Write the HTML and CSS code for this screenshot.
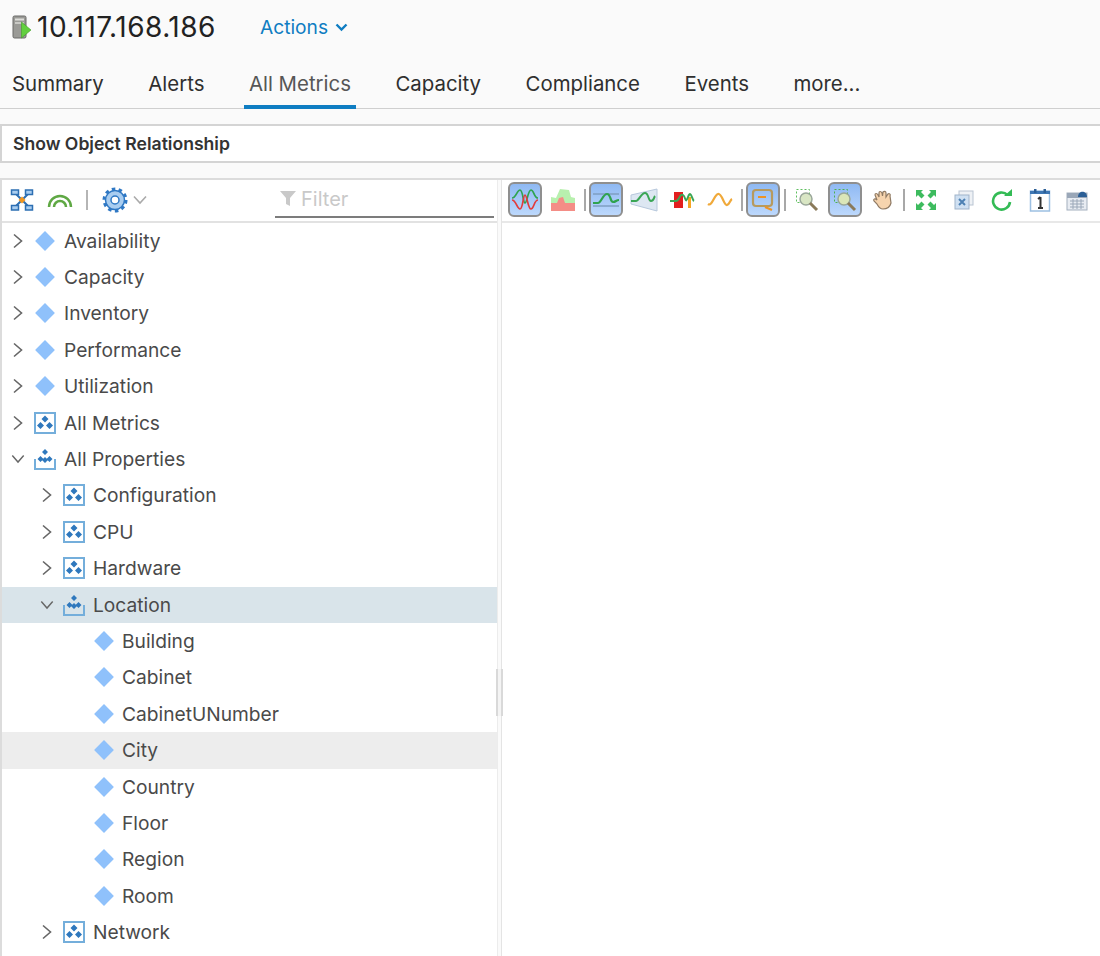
FILE: index.html
```html
<!DOCTYPE html>
<html lang="en">
<head>
<meta charset="utf-8">
<title>10.117.168.186</title>
<link rel="stylesheet" href="styles.css">
</head>
<body>
<svg class="defs" width="0" height="0" aria-hidden="true">
  <defs>
    <symbol id="chev-r" viewBox="0 0 12 16"><path d="M2 1.500 9.500 8 2 14.500" fill="none" stroke="#666" stroke-width="1.600"/></symbol>
    <symbol id="chev-d" viewBox="0 0 16 12"><path d="M1.500 2 8 9.500 14.500 2" fill="none" stroke="#666" stroke-width="1.600"/></symbol>
    <symbol id="diamond" viewBox="0 0 20 20"><path d="M10 1 19 10 10 19 1 10Z" fill="#8fc1fb"/></symbol>
    <symbol id="group" viewBox="0 0 22 22">
      <rect x="1" y="1" width="20" height="20" fill="#fff" stroke="#74aedb" stroke-width="2"/>
      <path d="M11 3.500 14.500 7 11 10.500 7.500 7ZM6.500 10 10 13.500 6.500 17 3 13.500ZM15.500 10 19 13.500 15.500 17 12 13.500Z" fill="#2f78bd"/>
    </symbol>
    <symbol id="group-open" viewBox="0 0 22 22">
      <path d="M1 11V21H21V11" fill="none" stroke="#74aedb" stroke-width="2"/>
      <path d="M11 1 14 4 11 7 8 4ZM6.500 8 9.500 11 6.500 14 3.500 11ZM15.500 8 18.500 11 15.500 14 12.500 11ZM11 9 14 12 11 15 8 12Z" fill="#2f78bd"/>
    </symbol>
  </defs>
</svg>

<header class="head">
  <div class="title-row">
    <svg class="host-icon" width="20" height="24" viewBox="0 0 20 24">
      <rect x="1" y="1" width="13" height="22" rx="1.500" fill="#9a9a96" stroke="#6a6a68"/>
      <rect x="3" y="3.500" width="9" height="2" fill="#dededa"/>
      <rect x="3" y="7" width="9" height="2" fill="#c9c9c5"/>
      <path d="M9.500 7 19 15 9.500 23Z" fill="#62cf3f" stroke="#3f9d25" stroke-width=".6"/>
    </svg>
    <h1 class="title">10.117.168.186</h1>
    <a class="actions">Actions
      <svg class="actions-chev" width="13" height="9" viewBox="0 0 13 9"><path d="M1.500 1.500 6.500 6.500 11.500 1.500" fill="none" stroke="#0f7dc2" stroke-width="2.400"/></svg>
    </a>
  </div>
  <nav class="tabs">
    <a class="tab">Summary</a>
    <a class="tab">Alerts</a>
    <a class="tab tab-active">All Metrics</a>
    <a class="tab">Capacity</a>
    <a class="tab">Compliance</a>
    <a class="tab">Events</a>
    <a class="tab">more...</a>
  </nav>
</header>

<div class="relation">Show Object Relationship</div>

<main class="panels">
  <section class="left">
    <div class="left-tools">
      <svg class="t-icon" width="24" height="24" viewBox="0 0 24 24">
        <path d="M5 5 19 19M19 5 5 19" stroke="#2d6fb3" stroke-width="2"/>
        <g fill="#a9cdf0" stroke="#2d6fb3" stroke-width="1.500">
          <rect x="1.500" y="2" width="7" height="4.500"/><rect x="15.500" y="2" width="7" height="4.500"/>
          <rect x="1.500" y="17.500" width="7" height="4.500"/><rect x="15.500" y="17.500" width="7" height="4.500"/>
        </g>
        <path d="M12 8.500 15.500 12 12 15.500 8.500 12Z" fill="#ef9620"/>
      </svg>
      <svg class="t-icon arc" width="26" height="16" viewBox="0 0 26 16">
        <path d="M2 15A11 11 0 0 1 24 15" fill="none" stroke="#5fa844" stroke-width="2.500"/>
        <path d="M7 15A6 6 0 0 1 19 15" fill="none" stroke="#5fa844" stroke-width="2.500"/>
      </svg>
      <span class="l-sep"></span>
      <svg class="t-icon gear" width="26" height="26" viewBox="0 0 26 26">
        <circle cx="13" cy="13" r="9.500" fill="#a9cdf0" stroke="#2f78c4" stroke-width="1.500"/>
        <circle cx="13" cy="13" r="11" fill="none" stroke="#2f78c4" stroke-width="3" stroke-dasharray="3.500 3.400"/>
        <circle cx="13" cy="13" r="4" fill="#fff" stroke="#2f78c4" stroke-width="1.500"/>
      </svg>
      <svg class="gear-chev" width="14" height="10" viewBox="0 0 14 10"><path d="M1 1.500 7 8 13 1.500" fill="none" stroke="#aaa" stroke-width="1.600"/></svg>
      <div class="filter">
        <svg width="16" height="17" viewBox="0 0 16 17"><path d="M0 1H16L10 8V16L6 14V8Z" fill="#c9c9c9"/></svg>
        <span>Filter</span>
      </div>
    </div>
    <ul class="tree">
      <li class="row"><svg class="chev"><use href="#chev-r"/></svg><svg class="node"><use href="#diamond"/></svg>Availability</li>
      <li class="row"><svg class="chev"><use href="#chev-r"/></svg><svg class="node"><use href="#diamond"/></svg>Capacity</li>
      <li class="row"><svg class="chev"><use href="#chev-r"/></svg><svg class="node"><use href="#diamond"/></svg>Inventory</li>
      <li class="row"><svg class="chev"><use href="#chev-r"/></svg><svg class="node"><use href="#diamond"/></svg>Performance</li>
      <li class="row"><svg class="chev"><use href="#chev-r"/></svg><svg class="node"><use href="#diamond"/></svg>Utilization</li>
      <li class="row"><svg class="chev"><use href="#chev-r"/></svg><svg class="node"><use href="#group"/></svg>All Metrics</li>
      <li class="row"><svg class="chev"><use href="#chev-d"/></svg><svg class="node"><use href="#group-open"/></svg>All Properties</li>
      <li class="row lv2"><svg class="chev"><use href="#chev-r"/></svg><svg class="node"><use href="#group"/></svg>Configuration</li>
      <li class="row lv2"><svg class="chev"><use href="#chev-r"/></svg><svg class="node"><use href="#group"/></svg>CPU</li>
      <li class="row lv2"><svg class="chev"><use href="#chev-r"/></svg><svg class="node"><use href="#group"/></svg>Hardware</li>
      <li class="row lv2 row-open"><svg class="chev"><use href="#chev-d"/></svg><svg class="node"><use href="#group-open"/></svg>Location</li>
      <li class="row lv3"><svg class="node"><use href="#diamond"/></svg>Building</li>
      <li class="row lv3"><svg class="node"><use href="#diamond"/></svg>Cabinet</li>
      <li class="row lv3"><svg class="node"><use href="#diamond"/></svg>CabinetUNumber</li>
      <li class="row lv3 row-hover"><svg class="node"><use href="#diamond"/></svg>City</li>
      <li class="row lv3"><svg class="node"><use href="#diamond"/></svg>Country</li>
      <li class="row lv3"><svg class="node"><use href="#diamond"/></svg>Floor</li>
      <li class="row lv3"><svg class="node"><use href="#diamond"/></svg>Region</li>
      <li class="row lv3"><svg class="node"><use href="#diamond"/></svg>Room</li>
      <li class="row lv2"><svg class="chev"><use href="#chev-r"/></svg><svg class="node"><use href="#group"/></svg>Network</li>
    </ul>
  </section>
  <div class="splitter"><span class="grip"></span></div>
  <section class="right">
    <div class="chart-tools">
      <span class="btn on"><svg width="28" height="25" viewBox="0 0 28 25"><path d="M1 11C5 11 6 3 9 3S12 16 14 16 17 3 20 3 23 11 27 11" fill="none" stroke="#2fa34f" stroke-width="1.700"/><path d="M1 13C5 13 6 22 9 22S12 8 14 8 17 22 20 22 23 13 27 13" fill="none" stroke="#e23c3c" stroke-width="1.700"/></svg></span>
      <span class="btn"><svg width="26" height="24" viewBox="0 0 26 24"><path d="M1 9 6 10 10 1 19 2 21 9 25 10V23H1Z" fill="#b8f0ae"/><path d="M1 15H7L9 10 13 9 15 15H25V23H1Z" fill="#f48d86"/></svg></span>
      <span class="sep"></span>
      <span class="btn on"><svg width="30" height="22" viewBox="0 0 28 22"><path d="M1 5H27M1 17H27" stroke="#7f9fc2" stroke-width="1.500"/><path d="M1 14H6C9 14 11 5 15 5S18 13 21 13 24 11 27 11" fill="none" stroke="#2fa34f" stroke-width="2.200"/></svg></span>
      <span class="btn"><svg width="28" height="26" viewBox="0 0 28 26"><path d="M1 8 27 2V24L1 17Z" fill="#dde7f2" stroke="#b7c8dc"/><path d="M1 14H6C9 14 11 6 15 6S18 14 21 14 24 10 25 9" fill="none" stroke="#3aa655" stroke-width="2"/></svg></span>
      <span class="btn"><svg width="26" height="20" viewBox="0 0 26 20"><rect x="5" y="2" width="9" height="16" fill="#e21f1f"/><rect x="19" y="7" width="3" height="11" fill="#f5a623"/><path d="M1 11H7C10 11 11 3 14 5S16 15 19 7 23 10 25 11" fill="none" stroke="#3aa655" stroke-width="2"/></svg></span>
      <span class="btn"><svg width="26" height="16" viewBox="0 0 26 16"><path d="M1 12C5 15 7 3 11 2S17 14 20 13 23 8 25 7" fill="none" stroke="#f0a93a" stroke-width="2.200"/></svg></span>
      <span class="sep"></span>
      <span class="btn on"><svg width="26" height="26" viewBox="0 0 26 26"><rect x="3" y="3" width="19" height="16" rx="3" fill="none" stroke="#b79a5e" stroke-width="2.200"/><path d="M8 10H16" stroke="#ec9326" stroke-width="2"/><path d="M15 20 22 23" stroke="#ec9326" stroke-width="2.200"/></svg></span>
      <span class="sep"></span>
      <span class="btn"><svg width="24" height="24" viewBox="0 0 24 24"><rect x="1.500" y="1.500" width="13" height="13" fill="none" stroke="#5ebf5e" stroke-dasharray="2 2"/><circle cx="11" cy="11" r="6" fill="#d9e6c4" stroke="#9aa79a" stroke-width="1.500"/><path d="M15 15 22 22" stroke="#8a7a5a" stroke-width="3"/></svg></span>
      <span class="btn on"><svg width="24" height="24" viewBox="0 0 24 24"><rect x="1.500" y="1.500" width="13" height="13" fill="none" stroke="#4fb04f" stroke-dasharray="2 2"/><circle cx="11" cy="11" r="6" fill="#dbe6b8" stroke="#9aa79a" stroke-width="1.500"/><path d="M15 15 22 22" stroke="#8a7a5a" stroke-width="3"/></svg></span>
      <span class="btn"><svg width="22" height="20" viewBox="0 0 22 20"><path d="M5 10 3 5C3 3 5 3 6 5L7 7 7 3C7 1 9 1 10 3L10.500 6 11 2C12 1 14 1 14 3L14 7 16 4C17 3 19 4 18 6L19 13C18 17 15 19 11 19 8 19 6 16 5 14L2 11C1 9 3 8 5 10Z" fill="#f6d4ae" stroke="#8f7a64" stroke-width="1.200"/></svg></span>
      <span class="sep"></span>
      <span class="btn"><svg width="22" height="22" viewBox="0 0 22 22" fill="#3dbb5e"><path d="M1 1H8L6 3 9.500 6.500 6.500 9.500 3 6 1 8ZM21 1V8L19 6 15.500 9.500 12.500 6.500 16 3 14 1ZM1 21V14L3 16 6.500 12.500 9.500 15.500 6 19 8 21ZM21 21H14L16 19 12.500 15.500 15.500 12.500 19 16 21 14Z"/></svg></span>
      <span class="btn"><svg width="20" height="20" viewBox="0 0 20 20"><rect x="5" y="1" width="14" height="14" fill="#eef1f5" stroke="#b9c4d2"/><rect x="1" y="5" width="14" height="14" fill="#cfe0f2" stroke="#9fb3ca"/><path d="M5 9 11 15M11 9 5 15" stroke="#4d80b3" stroke-width="2"/></svg></span>
      <span class="btn"><svg width="22" height="22" viewBox="0 0 22 22"><path d="M16.500 6A8.500 8.500 0 1 0 19 13" fill="none" stroke="#33bb55" stroke-width="2.600"/><path d="M13 7H21V0Z" fill="#33bb55"/></svg></span>
      <span class="btn"><svg width="22" height="24" viewBox="0 0 22 24"><rect x="1.500" y="3" width="19" height="20" fill="#fff" stroke="#9dc0e2" stroke-width="1.500"/><rect x="1" y="3" width="20" height="3" fill="#3d76b3"/><rect x="5" y="1" width="2.500" height="4" fill="#2c5f96"/><rect x="14.500" y="1" width="2.500" height="4" fill="#2c5f96"/><path d="M11.500 9V20M9 11 11.500 9M9 20H14" fill="none" stroke="#333" stroke-width="2"/></svg></span>
      <span class="btn"><svg width="22" height="22" viewBox="0 0 22 22"><rect x="1" y="4" width="20" height="17" fill="#e8ecf2" stroke="#a3afbe"/><rect x="1" y="4" width="20" height="5" fill="#9aa7b8"/><path d="M12 8C12 1 21 1 21 8Z" fill="#2c5f96"/><path d="M4 12H18M4 15H18M4 18H18M7 10V20M11 10V20M15 10V20" stroke="#9aa7b8"/></svg></span>
    </div>
  </section>
</main>
</body>
</html>
```

FILE: styles.css
```css
* { box-sizing: border-box; }

html, body { height: 100%; }

body {
  margin: 0;
  height: 956px;
  overflow: hidden;
  background: #fafafa;
  color: #4a4a4a;
  font-family: Inter, "Open Sans", "Liberation Sans", sans-serif;
}

.defs { position: absolute; }

a { color: inherit; }

.head {
  height: 109px;
  border-bottom: 1px solid #cfcfcf;
}

.title-row {
  height: 54px;
  display: flex;
  align-items: center;
  padding-left: 12px;
}

.host-icon { margin-right: 5px; }

.title {
  margin: 0;
  font-size: 28px;
  font-weight: 400;
  letter-spacing: 0.5px;
  color: #222;
}

.actions {
  margin-left: 44px;
  display: flex;
  align-items: center;
  gap: 7px;
  font-size: 19.2px;
  color: #0f7dc2;
}

.tabs {
  height: 55px;
  display: flex;
  gap: 44.5px;
  padding-left: 12px;
}

.tab {
  height: 55px;
  padding-top: 16.5px;
  font-size: 20.4px;
  color: #2f2f2f;
}

.tab-active {
  margin: 0 -5px;
  padding: 16.5px 5px 0;
  border-bottom: 4px solid #0f7dc2;
  color: #565656;
}

.relation {
  height: 39px;
  margin-top: 15px;
  padding-left: 11px;
  display: flex;
  align-items: center;
  background: #fff;
  border: solid #d4d4d4;
  border-width: 2px 0 2px 2px;
  font-size: 17.6px;
  font-weight: 600;
  color: #333;
}

.panels {
  margin-top: 15px;
  height: 779px;
  display: flex;
  background: #fff;
  border-top: 2px solid #dcdcdc;
  border-left: 2px solid #dcdcdc;
}

.left {
  width: 495px;
  flex: none;
  display: flex;
  flex-direction: column;
}

.left-tools {
  height: 43px;
  flex: none;
  display: flex;
  align-items: center;
  padding: 0 0 2px 8px;
  border-bottom: 2px solid #e2e2e2;
}

.arc { margin-left: 13px; }

.l-sep {
  width: 2px;
  height: 20px;
  margin: 0 14px 0 13px;
  background: #b5b5b5;
}

.gear-chev { margin-left: 5px; }

.filter {
  margin-left: 128px;
  width: 219px;
  height: 36px;
  display: flex;
  align-items: center;
  gap: 5px;
  padding: 0 0 0 5px;
  border-bottom: 2px solid #7c7c7c;
  font-size: 20px;
  color: #c9c9c9;
}

.tree {
  margin: 0;
  padding: 0;
  list-style: none;
  flex: 1;
  overflow: hidden;
}

.row {
  height: 36.4px;
  display: flex;
  align-items: center;
  padding-bottom: 1px;
  font-size: 19.2px;
  color: #4a4a4a;
  padding-left: 9px;
}

.lv2 { padding-left: 38px; }

.lv3 { padding-left: 91px; }

.lv3 .node { margin-right: 7px; }

.row-open { background: #d9e4ea; }

.row-hover { background: #ededed; }

.chev {
  width: 14px;
  height: 16px;
  flex: none;
  margin-right: 9px;
}

.node {
  width: 22px;
  height: 22px;
  flex: none;
  margin-right: 8px;
}

.splitter {
  width: 5px;
  flex: none;
  position: relative;
  background: #fafafa;
  border-left: 1px solid #ececec;
  border-right: 1px solid #e4e4e4;
}

.grip {
  position: absolute;
  top: 489px;
  left: -2px;
  width: 7px;
  height: 47px;
  border: solid #d9d9d9;
  border-width: 0 2px;
  background: #f4f4f4;
}

.right {
  flex: 1;
  min-width: 0;
}

.chart-tools {
  height: 43px;
  display: flex;
  align-items: center;
  gap: 3.8px;
  padding: 0 0 2px 6px;
  border-bottom: 2px solid #e8e8e8;
  white-space: nowrap;
}

.btn {
  width: 34px;
  height: 35px;
  flex: none;
  display: flex;
  align-items: center;
  justify-content: center;
  border: 2px solid transparent;
  border-radius: 6px;
}

.btn.on {
  border-color: #8f8f8f;
  background: linear-gradient(#8fb9f3, #bcd8fc);
}

.sep {
  width: 2px;
  height: 22px;
  flex: none;
  background: #a8a8a8;
}
```
